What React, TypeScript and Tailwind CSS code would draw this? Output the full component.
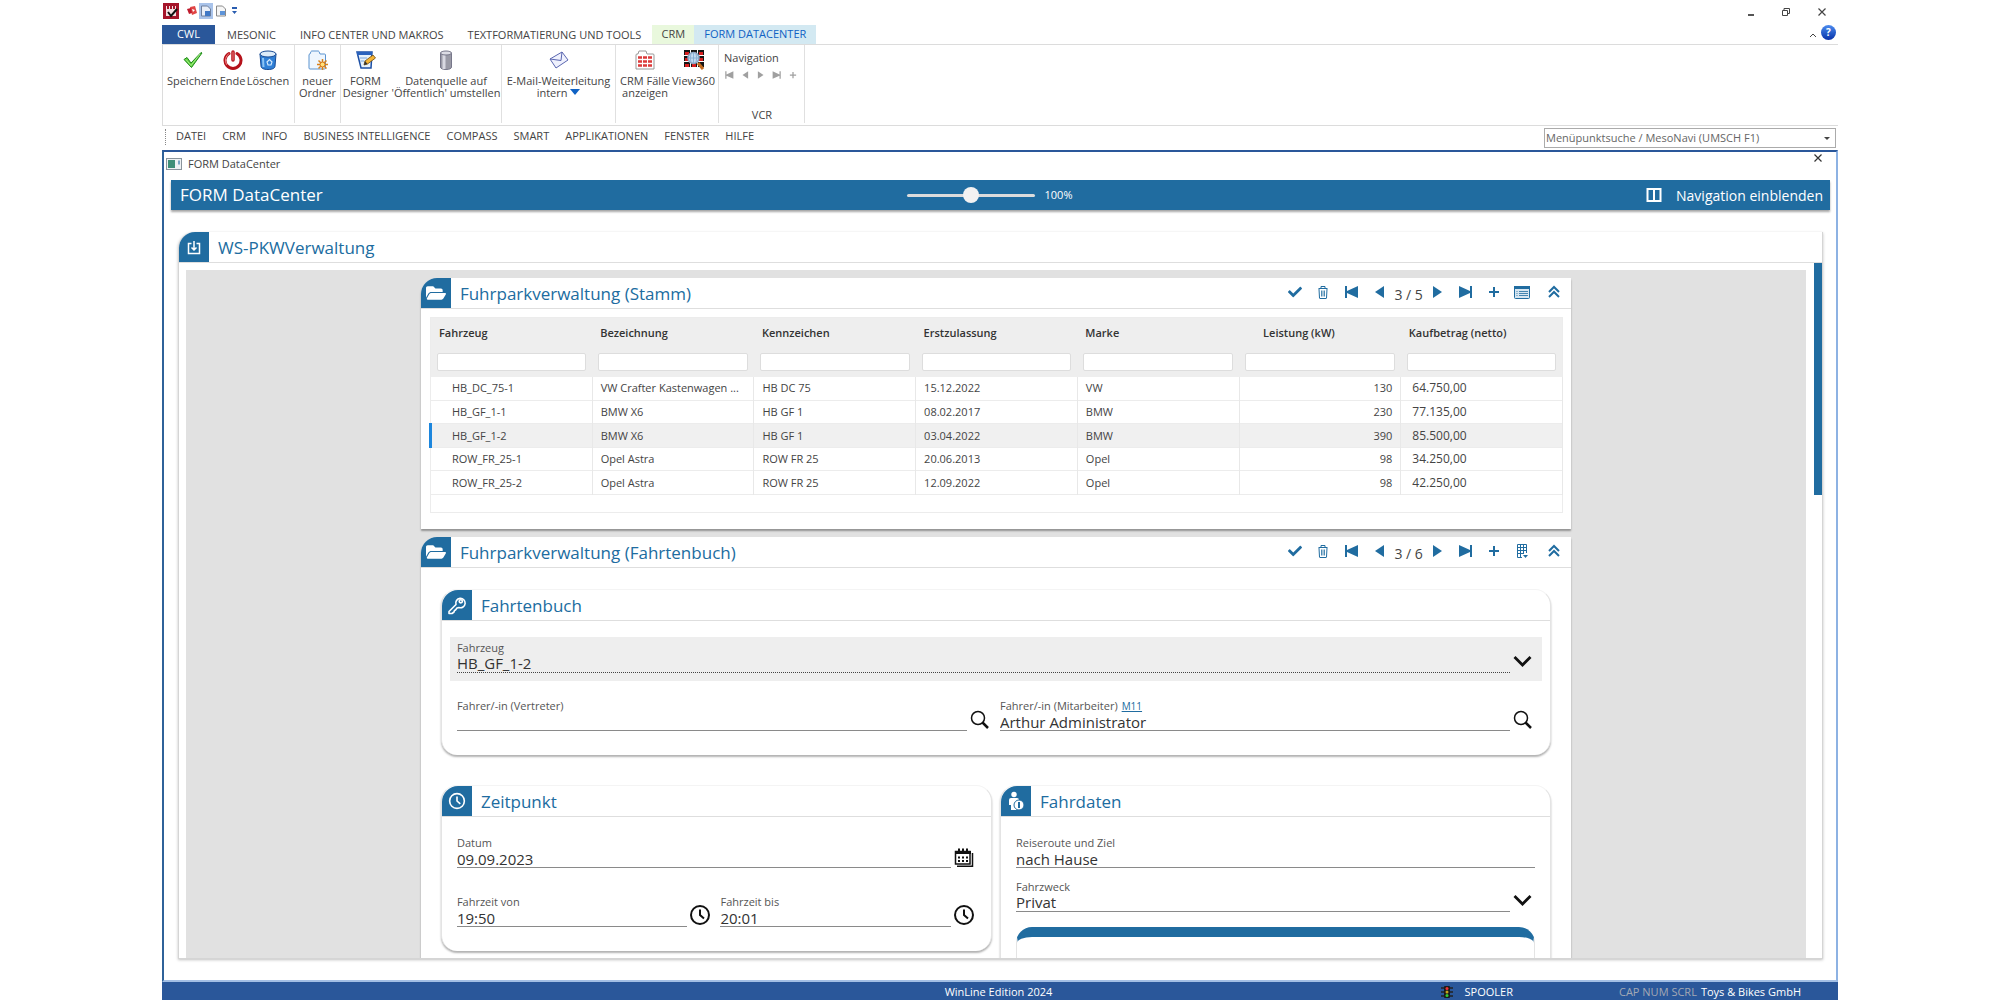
import { useState, type ReactNode } from "react";
import { FaCheck, FaFolderOpen } from "react-icons/fa";

type IconProps = { className?: string };

const ribbonTabs = ["MESONIC", "INFO CENTER UND MAKROS", "TEXTFORMATIERUNG UND TOOLS"];

const menuItems = [
  "DATEI",
  "CRM",
  "INFO",
  "BUSINESS INTELLIGENCE",
  "COMPASS",
  "SMART",
  "APPLIKATIONEN",
  "FENSTER",
  "HILFE",
];

const columns = [
  "Fahrzeug",
  "Bezeichnung",
  "Kennzeichen",
  "Erstzulassung",
  "Marke",
  "Leistung (kW)",
  "Kaufbetrag (netto)",
];

const vehicles = [
  ["HB_DC_75-1", "VW Crafter Kastenwagen ...", "HB DC 75", "15.12.2022", "VW", "130", "64.750,00"],
  ["HB_GF_1-1", "BMW X6", "HB GF 1", "08.02.2017", "BMW", "230", "77.135,00"],
  ["HB_GF_1-2", "BMW X6", "HB GF 1", "03.04.2022", "BMW", "390", "85.500,00"],
  ["ROW_FR_25-1", "Opel Astra", "ROW FR 25", "20.06.2013", "Opel", "98", "34.250,00"],
  ["ROW_FR_25-2", "Opel Astra", "ROW FR 25", "12.09.2022", "Opel", "98", "42.250,00"],
];

/* ---------- icons ---------- */

function SaveIcon() {
  return (
    <svg className="h-5 w-5" viewBox="0 0 20 20">
      <path d="M1 9.500l3-2 4 5.500L18 2.500l1 .500L8.500 17.500z" fill="#5fd23c" stroke="#1f8a1c" strokeLinejoin="round" />
      <path d="M3 9.500l5 6L17 4" fill="none" stroke="#b5f09a" strokeWidth=".8" />
    </svg>
  );
}

function PowerIcon() {
  return (
    <svg className="h-5 w-5" viewBox="0 0 20 20" fill="none" strokeLinecap="round">
      <path d="M6 3.500a8 8 0 1 0 8 0" stroke="#b5121b" strokeWidth="3" />
      <path d="M10 2v8" stroke="#b5121b" strokeWidth="3.500" />
      <path d="M6 3.500a8 8 0 0 0-2.500 11M10 2v8" stroke="#f08080" strokeWidth="1" />
    </svg>
  );
}

function BinIcon() {
  return (
    <svg className="h-5 w-5" viewBox="0 0 20 20">
      <path d="M2 4l1 12c0 2 2 3.500 7 3.500s7-1.500 7-3.500l1-12z" fill="#2f7fd6" stroke="#174a94" />
      <ellipse cx="10" cy="4" rx="8" ry="3" fill="#dcebf9" stroke="#174a94" />
      <path d="M5 8l.5 9" stroke="#8cc4f5" strokeWidth="2" />
      <path d="M9 12l2.500-2.500 2.500 2.500-1 3h-3z" fill="none" stroke="#d5eafd" strokeWidth="1.200" />
    </svg>
  );
}

function NewFolderIcon() {
  return (
    <svg className="h-5 w-5" viewBox="0 0 20 20">
      <path d="M1 5q0-1 1-1l1-2.500q.3-.500 1-.500h6q.700 0 1 .500L12 4h4.500q1 0 1 1v13q0 1-1 1H2q-1 0-1-1z" fill="#eef6fe" stroke="#5b93cf" />
      <path d="M14.500 9v11M9 14.500h11M10.500 10.500l8 8M18.500 10.500l-8 8" stroke="#d98218" strokeWidth="1.500" />
      <circle cx="14.500" cy="14.500" r="2.500" fill="#ffe27a" stroke="#d6721a" />
    </svg>
  );
}

function DesignerIcon() {
  return (
    <svg className="h-5 w-5" viewBox="0 0 20 20">
      <path d="M1 2h15l-1 16H5z" fill="#e6f1fc" stroke="#1c4fa5" strokeWidth="1.500" />
      <path d="M1 2h15v3H1z" fill="#2a62bd" />
      <path d="M4 8h7M4.500 11h4" stroke="#7ba6dc" />
      <path d="M8 15l1-4 8-6 2.500 3-8 6z" fill="#f6b433" stroke="#6b4a10" strokeWidth=".8" />
      <path d="M8 15l1-4 2.500 3z" fill="#333" />
    </svg>
  );
}

function DatabaseIcon() {
  return (
    <svg className="h-5 w-5" viewBox="0 0 20 20">
      <path d="M4.500 3v14c0 1.500 2 2.500 5.500 2.500s5.500-1 5.500-2.500V3z" fill="#9a9aa6" stroke="#77778a" />
      <path d="M8 4v15" stroke="#d9d9e2" strokeWidth="3" />
      <ellipse cx="10" cy="3" rx="5.500" ry="2" fill="#dcdce4" stroke="#77778a" />
    </svg>
  );
}

function MailIcon() {
  return (
    <svg className="h-5 w-5" viewBox="0 0 20 20">
      <path d="M1 9l12-7 6 8-12 8z" fill="#eff1fd" stroke="#5a66b0" strokeLinejoin="round" />
      <path d="M1 9l11 1.500L13 2" fill="none" stroke="#5a66b0" strokeLinejoin="round" />
    </svg>
  );
}

function CasesIcon() {
  return (
    <svg className="h-5 w-5" viewBox="0 0 20 20">
      <path d="M1 19V5q0-1 1-1h1l1-3h7l1 3h6q1 0 1 1v14z" fill="#fff" stroke="#999" />
      <path d="M3 7.500h4M8 7.500h4M13 7.500h4M3 11.500h4M8 11.500h4M13 11.500h4M3 15.500h4M8 15.500h4M13 15.500h4" stroke="#dc3a3a" strokeWidth="2.500" />
    </svg>
  );
}

function View360Icon() {
  return (
    <svg className="h-5 w-5" viewBox="0 0 20 20">
      <path d="M0 0h6v5H0zM7 0h6v5H7zM14 0h6v5h-6zM0 6h6v5H0zM14 6h6v5h-6zM0 12h6v5H0zM7 12h6v5H7zM14 12h6v5h-6z" fill="#151515" />
      <path d="M1 2h4v3H1zM8 2h4v3H8zM15 2h4v3h-4zM1 8h4v3H1zM15 8h4v3h-4zM1 14h4v3H1zM8 14h4v3H8z" fill="#d81e1e" />
      <circle cx="9.500" cy="8" r="5.500" fill="#c3dbf1" stroke="#8aa6c4" strokeWidth="1.500" />
      <path d="M4 8h11M9.500 3v10M7 4q-1.500 4 0 8M12 4q1.500 4 0 8" stroke="#7fa8d0" strokeWidth=".8" fill="none" />
      <path d="M14 13l5 6" stroke="#c26a1e" strokeWidth="3" />
    </svg>
  );
}

function FirstIcon({ className = "h-4 w-4" }: IconProps) {
  return (
    <svg className={className} viewBox="0 0 16 16" fill="currentColor">
      <path d="M2 2h2v5L15 2v12L4 9v5H2z" />
    </svg>
  );
}

function LastIcon({ className = "h-4 w-4" }: IconProps) {
  return (
    <svg className={className} viewBox="0 0 16 16" fill="currentColor">
      <path d="M14 2h-2v5L1 2v12l11-5v5h2z" />
    </svg>
  );
}

function PrevIcon({ className = "h-4 w-4" }: IconProps) {
  return (
    <svg className={className} viewBox="0 0 16 16" fill="currentColor">
      <path d="M13 2v12L4 8z" />
    </svg>
  );
}

function NextIcon({ className = "h-4 w-4" }: IconProps) {
  return (
    <svg className={className} viewBox="0 0 16 16" fill="currentColor">
      <path d="M3 2v12l9-6z" />
    </svg>
  );
}

function PlusIcon({ className = "h-4 w-4" }: IconProps) {
  return (
    <svg className={className} viewBox="0 0 16 16" fill="currentColor">
      <path d="M7 3h2v4h4v2H9v4H7V9H3V7h4z" />
    </svg>
  );
}

function TrashIcon() {
  return (
    <svg className="h-4 w-4" viewBox="0 0 16 16" fill="none" stroke="currentColor">
      <path d="M3.500 4.500h9M6 4V2.500h4V4M4 5l.5 9q0 .500.500.500h6q.500 0 .500-.500L12 5" />
      <path d="M6.500 6.500v6M8 6.500v6M9.500 6.500v6" strokeWidth=".8" />
    </svg>
  );
}

function ListIcon() {
  return (
    <svg className="h-4 w-4" viewBox="0 0 16 16" fill="none" stroke="currentColor">
      <rect x=".5" y="2.500" width="15" height="12" rx="1" fill="#d7e6f1" />
      <path d="M0 3.500h16" strokeWidth="3" />
      <path d="M5 7.500h9M5 9.500h9M5 11.500h9M2.500 7.500h1M2.500 9.500h1M2.500 11.500h1" strokeWidth=".8" />
    </svg>
  );
}

function GridIcon() {
  return (
    <svg className="h-4 w-4" viewBox="0 0 16 16" fill="none" stroke="currentColor">
      <path d="M8 14.500H3.500v-13h9V10M3.500 4.500h9M3.500 7.500h9M3.500 10.500H10M6.500 1.500v13M9.500 1.500V11" />
      <path d="M9 12h5l-2.500 3z" fill="currentColor" stroke="none" />
    </svg>
  );
}

function CollapseIcon() {
  return (
    <svg className="h-4 w-4" viewBox="0 0 16 16" fill="none" stroke="currentColor" strokeWidth="2">
      <path d="M3 8l5-5 5 5M3 13l5-5 5 5" />
    </svg>
  );
}

function ImportIcon() {
  return (
    <svg className="h-4 w-4" viewBox="0 0 16 16" fill="none" stroke="currentColor" strokeWidth="1.500">
      <path d="M5.500 4.500H2.500v10h11v-10h-3M8 2v9M5.500 8.500L8 11l2.500-2.500" />
    </svg>
  );
}

function KeyIcon() {
  return (
    <svg className="h-5 w-5" viewBox="0 0 20 20" fill="none" stroke="currentColor" strokeWidth="1.600" strokeLinejoin="round">
      <path d="M9 9.500a4.700 4.700 0 1 1 3 3l-2 .500-1.500 2-1 .500-.500 1.500-2 1.500H2v-2z" />
      <circle cx="13.800" cy="6.300" r="1.600" />
    </svg>
  );
}

function ClockIcon({ className = "h-[22px] w-[22px]" }: IconProps) {
  return (
    <svg className={className} viewBox="0 0 22 22" fill="none" stroke="currentColor" strokeWidth="2">
      <circle cx="11" cy="11" r="9" />
      <path d="M11 5.500V11l4 3.500" />
    </svg>
  );
}

function PersonIcon() {
  return (
    <svg className="h-5 w-5" viewBox="0 0 20 20" fill="currentColor">
      <circle cx="8" cy="3.500" r="2.700" />
      <path d="M3 9q0-2 2-2h6q2 0 2 2v10H5v-5H3z" />
      <circle cx="13" cy="14" r="5" stroke="#206ca0" />
      <path d="M12 11h2v6h-2z" fill="#206ca0" />
    </svg>
  );
}

function SearchIcon() {
  return (
    <svg className="h-5 w-5" viewBox="0 0 20 20" fill="none" stroke="currentColor">
      <circle cx="8" cy="8" r="6.500" strokeWidth="1.500" />
      <path d="M12.500 12.500l5.500 5.500" strokeWidth="2.500" />
    </svg>
  );
}

function ChevronIcon() {
  return (
    <svg className="h-5 w-5" viewBox="0 0 20 20" fill="none" stroke="currentColor" strokeWidth="2.800">
      <path d="M1.500 5l8 8 8-8" />
    </svg>
  );
}

function CalendarIcon() {
  return (
    <svg className="h-5 w-5" viewBox="0 0 20 20" fill="none" stroke="currentColor">
      <rect x="1.500" y="4.500" width="14.500" height="12.500" strokeWidth="1.500" />
      <path d="M1 5.500h16" strokeWidth="3" />
      <path d="M5 1.500v4M9 1.500v4M13 1.500v4" strokeWidth="2" />
      <path d="M4 10.500h2M8 10.500h2M12 10.500h2M4 14h2M8 14h2M12 14h2" strokeWidth="2" />
      <path d="M18.500 6v13.200H3" strokeWidth="1.500" />
    </svg>
  );
}

function CloseIcon() {
  return (
    <svg className="h-2 w-2" viewBox="0 0 8 8" fill="none" stroke="currentColor" strokeWidth="1.200">
      <path d="M.5.5l7 7M7.500.5l-7 7" />
    </svg>
  );
}

/* ---------- ribbon ---------- */

function RibbonButton({ icon, className, children }: { icon: ReactNode; className: string; children: ReactNode }) {
  return (
    <button type="button" className={`flex shrink-0 flex-col items-center whitespace-nowrap leading-3 ${className}`}>
      {icon}
      <span className="mt-[5px]">{children}</span>
    </button>
  );
}

function TitleBar() {
  return (
    <header className="flex h-[25px] items-start justify-between pr-3">
      <div className="flex h-[22px] items-center pl-px">
        <svg className="h-4 w-4" viewBox="0 0 16 16">
          <rect width="16" height="16" fill="#a5142a" />
          <path d="M3 3h10v10H3z" fill="#f4dfe2" />
          <path d="M4 3h2v3H4zM7 3h2v3H7zM10 3h2v3h-2z" fill="#a5142a" />
          <path d="M5 9l3 4 6-7" fill="none" stroke="#111" strokeWidth="2" />
        </svg>
        <svg className="ml-2 h-3 w-3" viewBox="0 0 12 12">
          <path d="M3 2l5-1 2 7-5 2z" fill="#e04545" />
          <path d="M0 4l4-1 1 5-3 1z" fill="#c01c2e" />
          <path d="M5 4l3 1-2 2z" fill="#fff" />
        </svg>
        <button type="button" aria-label="Speichern" className="flex h-4 w-[14px] items-center justify-center bg-[#a9c3ea]">
          <svg className="h-3 w-3" viewBox="0 0 12 12">
            <path d="M1.500 1h6l3 3v7h-9z" fill="#e8eef8" stroke="#6d7f9d" />
            <path d="M5 6h5v5H5z" fill="#3f78c6" />
          </svg>
        </button>
        <svg className="ml-[2px] h-3 w-3" viewBox="0 0 12 12">
          <path d="M1.500 1h6l3 3v7h-9z" fill="#f6f6f6" stroke="#8a8a8a" />
          <path d="M5 6h5v4H5z" fill="#5d93d8" />
        </svg>
        <svg className="ml-1 h-2 w-2" viewBox="0 0 8 8" fill="#2a5db0">
          <path d="M1 0h5v2H1zM1 4h5L3.500 7z" />
        </svg>
      </div>
      <div className="flex h-[23px] items-center gap-7 text-[#444]">
        <button type="button" aria-label="Minimieren" className="flex h-2 w-[6px] items-end">
          <span className="h-[2px] w-full bg-[#555]" />
        </button>
        <button type="button" aria-label="Wiederherstellen">
          <svg className="h-2 w-2" viewBox="0 0 8 8" fill="none" stroke="currentColor">
            <path d="M2 2V.5h5.500v5H6M.5 2.500h5v5h-5z" />
          </svg>
        </button>
        <button type="button" aria-label="Schließen">
          <CloseIcon />
        </button>
      </div>
    </header>
  );
}

function RibbonTabs() {
  return (
    <nav className="flex h-5 items-stretch justify-between border-b border-[#dcdcdc] text-[11px] text-[#444]">
      <div className="flex whitespace-nowrap">
        <button type="button" className="w-[53px] bg-[#2a579a] text-white">
          CWL
        </button>
        <div className="flex items-center gap-6 pt-px pl-3">
          {ribbonTabs.map((tab) => (
            <button type="button" key={tab}>
              {tab}
            </button>
          ))}
        </div>
        <button type="button" className="ml-[11px] w-[42px] bg-[#e9f8dd]">
          CRM
        </button>
        <button type="button" className="w-[122px] bg-[#d3e9f2] text-[#0f62c4]">
          FORM DATACENTER
        </button>
      </div>
      <div className="flex items-center gap-1 pr-[2px]">
        <button type="button" aria-label="Menüband reduzieren">
          <svg className="h-2 w-2" viewBox="0 0 8 8" fill="none" stroke="currentColor">
            <path d="M1 6l3-3 3 3" />
          </svg>
        </button>
        <button
          type="button"
          className="mb-1 h-[15px] w-[15px] rounded-full bg-linear-to-b from-[#4d8cf0] to-[#0a2fa8] text-[10px] leading-[15px] font-bold text-white"
        >
          ?
        </button>
      </div>
    </nav>
  );
}

function Ribbon() {
  return (
    <div className="flex h-[81px] border-b border-l border-[#dcdcdc] pb-[2px] text-[11px] text-[#444]">
      <div className="flex w-[132px] gap-[2px] border-r border-[#e0e0e0] pt-[5px] pl-1">
        <RibbonButton icon={<SaveIcon />} className="w-[51px]">
          Speichern
        </RibbonButton>
        <RibbonButton icon={<PowerIcon />} className="w-[25px]">
          Ende
        </RibbonButton>
        <RibbonButton icon={<BinIcon />} className="w-[42px]">
          Löschen
        </RibbonButton>
      </div>
      <div className="flex w-[46px] justify-center border-r border-[#e0e0e0] pt-[5px]">
        <RibbonButton icon={<NewFolderIcon />} className="w-10">
          neuer
          <br />
          Ordner
        </RibbonButton>
      </div>
      <div className="flex w-[161px] gap-[3px] border-r border-[#e0e0e0] pt-[5px] pl-px">
        <RibbonButton icon={<DesignerIcon />} className="w-[47px]">
          FORM
          <br />
          Designer
        </RibbonButton>
        <RibbonButton icon={<DatabaseIcon />} className="w-[108px]">
          Datenquelle auf
          <br />
          'Öffentlich' umstellen
        </RibbonButton>
      </div>
      <div className="flex w-[114px] justify-center border-r border-[#e0e0e0] pt-[5px]">
        <RibbonButton icon={<MailIcon />} className="w-[104px]">
          E-Mail-Weiterleitung
          <br />
          intern <span className="inline-block border-x-[5px] border-t-[6px] border-x-transparent border-t-[#0f62c4] align-[2px]" />
        </RibbonButton>
      </div>
      <div className="flex w-[103px] gap-px border-r border-[#e0e0e0] pt-[5px] pl-[3px]">
        <RibbonButton icon={<CasesIcon />} className="w-[52px]">
          CRM Fälle
          <br />
          anzeigen
        </RibbonButton>
        <RibbonButton icon={<View360Icon />} className="w-[43px]">
          View360
        </RibbonButton>
      </div>
      <div className="flex w-[86px] flex-col border-r border-[#e0e0e0] pt-[5px] pl-[5px]">
        <span className="leading-4">Navigation</span>
        <div className="flex gap-[6px] pt-1 text-[#a0a0a0]">
          <button type="button" aria-label="Erster Datensatz">
            <FirstIcon className="h-[10px] w-[10px]" />
          </button>
          <button type="button" aria-label="Vorheriger Datensatz">
            <PrevIcon className="h-[10px] w-[10px]" />
          </button>
          <button type="button" aria-label="Nächster Datensatz">
            <NextIcon className="h-[10px] w-[10px]" />
          </button>
          <button type="button" aria-label="Letzter Datensatz">
            <LastIcon className="h-[10px] w-[10px]" />
          </button>
          <button type="button" aria-label="Neuer Datensatz">
            <PlusIcon className="h-[10px] w-[10px]" />
          </button>
        </div>
        <span className="mt-auto pr-1 text-center leading-4">VCR</span>
      </div>
    </div>
  );
}

function MenuBar() {
  return (
    <nav className="flex h-6 items-center justify-between pr-[2px] text-[11px] text-[#444]">
      <div className="mb-[3px] ml-[3px] flex h-4 items-center gap-4 border-l border-dotted border-[#888] pl-[10px] whitespace-nowrap">
        {menuItems.map((item) => (
          <button type="button" key={item}>
            {item}
          </button>
        ))}
      </div>
      <div className="flex h-5 w-[292px] items-center border border-[#ababab] bg-white px-px">
        <input
          aria-label="Menüpunktsuche"
          className="h-[18px] min-w-0 flex-1 text-[11px] leading-[18px] outline-none placeholder:text-[#666]"
          placeholder="Menüpunktsuche / MesoNavi (UMSCH F1)"
        />
        <span className="mr-1 border-x-[3px] border-t-[3px] border-x-transparent border-t-[#444]" />
      </div>
    </nav>
  );
}

/* ---------- form building blocks ---------- */

function SectionHeader({ icon, title, children }: { icon: ReactNode; title: string; children?: ReactNode }) {
  return (
    <div className="flex h-[31px] shrink-0 items-stretch border-b border-[#dedede]">
      <span className="flex h-[30px] w-[30px] items-center justify-center rounded-tl-2xl bg-[#206ca0] text-white">
        {icon}
      </span>
      <h2 className="flex-1 pl-[9px] text-[17px] leading-[31px] text-[#206ca0]">{title}</h2>
      {children}
    </div>
  );
}

function Toolbar({ position, extra }: { position: string; extra: ReactNode }) {
  return (
    <div className="flex h-7 items-center text-[#206ca0]">
      <button type="button" aria-label="Übernehmen" className="flex w-7 justify-center">
        <FaCheck className="h-[14px] w-[14px]" />
      </button>
      <button type="button" aria-label="Löschen" className="flex w-7 justify-center">
        <TrashIcon />
      </button>
      <button type="button" aria-label="Erster" className="flex w-7 justify-center">
        <FirstIcon />
      </button>
      <button type="button" aria-label="Zurück" className="flex w-7 justify-center">
        <PrevIcon />
      </button>
      <span className="w-[31px] pt-1 text-center text-[14px] whitespace-nowrap text-[#444]">{position}</span>
      <button type="button" aria-label="Weiter" className="flex w-7 justify-center">
        <NextIcon />
      </button>
      <button type="button" aria-label="Letzter" className="flex w-7 justify-center">
        <LastIcon />
      </button>
      <button type="button" aria-label="Neu" className="flex w-7 justify-center">
        <PlusIcon />
      </button>
      <button type="button" aria-label="Ansicht" className="flex w-7 justify-center">
        {extra}
      </button>
      <button type="button" aria-label="Einklappen" className="flex w-[35px] justify-center">
        <CollapseIcon />
      </button>
    </div>
  );
}

type FieldProps = {
  id: string;
  label: string;
  value: string;
  icon?: ReactNode;
  link?: string;
  select?: boolean;
  dotted?: boolean;
};

function Field({ id, label, value, icon, link, select, dotted }: FieldProps) {
  const box = `h-[18px] w-full appearance-none border-b bg-transparent text-[15px] leading-[17px] text-[#333] outline-none ${
    dotted ? "border-dotted border-[#444]" : "border-[#8a8a8a]"
  }`;
  return (
    <div className="flex min-w-0 items-end">
      <div className="min-w-0 flex-1">
        <div className="flex gap-1 text-[11px] leading-[14px] text-[#555]">
          <label htmlFor={id}>{label}</label>
          {link && (
            <a href="#" className="text-[10px] text-[#206ca0] underline">
              {link}
            </a>
          )}
        </div>
        {select ? (
          <select id={id} className={`block ${box}`}>
            <option>{value}</option>
          </select>
        ) : (
          <input id={id} className={`block ${box}`} defaultValue={value} />
        )}
      </div>
      {icon && <span className="flex w-[25px] shrink-0 justify-center pb-px text-[#111]">{icon}</span>}
    </div>
  );
}

function Group({ icon, title, children }: { icon: ReactNode; title: string; children: ReactNode }) {
  return (
    <section className="rounded-2xl border-x border-t border-x-[#e4e4e4] border-t-[#f4f4f4] bg-white shadow-[0_2px_2px_rgba(0,0,0,0.3)]">
      <SectionHeader icon={icon} title={title} />
      {children}
    </section>
  );
}

function cellClass(i: number, active: boolean) {
  if (i === 0) return active ? "border-l-[3px] border-l-[#1c86dd] pl-5" : "pl-[21px]";
  if (i === 5) return "pr-2 text-right";
  if (i === 6) return "pl-[11px] text-[12px]";
  return "pl-2";
}

function VehicleTable() {
  return (
    <table className="w-full table-fixed border-collapse border border-[#ececec] text-left text-[11px] text-[#444]">
      <thead className="bg-[#eee] text-[#333]">
        <tr className="h-[30px]">
          {columns.map((col, i) => (
            <th key={col} scope="col" className={`font-semibold ${i === 5 ? "pl-6" : "pl-2"}`}>
              {col}
            </th>
          ))}
        </tr>
        <tr className="h-[29px]">
          {columns.map((col) => (
            <td key={col} className="px-[6px]">
              <input
                aria-label={`Filter ${col}`}
                className="block h-[18px] w-full rounded-xs border border-[#ddd] bg-white px-1 outline-none"
              />
            </td>
          ))}
        </tr>
      </thead>
      <tbody>
        {vehicles.map((row) => {
          const active = row[0] === "HB_GF_1-2";
          return (
            <tr key={row[0]} className={`border-b border-[#ececec] odd:h-6 even:h-[23px] ${active ? "bg-[#f0f0f0]" : ""}`}>
              {row.map((cell, i) => (
                <td
                  key={i}
                  className={`border-r border-[#e8e8e8] py-0 leading-4 whitespace-nowrap ${cellClass(i, active)}`}
                >
                  {cell}
                </td>
              ))}
            </tr>
          );
        })}
        <tr className="h-[18px]">
          <td colSpan={7} />
        </tr>
      </tbody>
    </table>
  );
}

function DataCenter() {
  const [zoom, setZoom] = useState(100);

  return (
    <main className="flex min-h-0 flex-1 flex-col border-2 border-t-[#2a579a] border-r-[#8db2e3] border-b-[#a3bfe4] border-l-[#2f6299] bg-white">
      <div className="flex h-7 shrink-0 items-start justify-between pr-[14px] pl-[2px]">
        <div className="flex h-6 items-center gap-[6px] text-[11px] text-[#444]">
          <svg className="h-3 w-4" viewBox="0 0 16 12">
            <rect x=".5" y=".5" width="15" height="11" fill="#eef1f3" stroke="#8a949c" />
            <rect x="2" y="2" width="7" height="8" fill="#3f8f78" />
            <path d="M12 2.500h2v4h-2z" fill="#7aa6c4" />
          </svg>
          FORM DataCenter
        </div>
        <button type="button" aria-label="Fenster schließen" className="flex h-3 items-center text-[#333]">
          <CloseIcon />
        </button>
      </div>

      <div className="mr-[6px] ml-[7px] grid h-[30px] shrink-0 grid-cols-[1fr_auto_1fr] items-center bg-[#206ca0] pr-[7px] pl-[9px] text-white shadow-[0_2px_2px_rgba(0,0,0,0.35)]">
        <h1 className="text-[17px]">FORM DataCenter</h1>
        <label className="flex items-center gap-[10px] pr-6 text-[11px]">
          <input
            type="range"
            min={50}
            max={150}
            value={zoom}
            onChange={(e) => setZoom(Number(e.target.value))}
            aria-label="Zoom"
            className="h-4 w-32 appearance-none bg-transparent [&::-webkit-slider-runnable-track]:h-[3px] [&::-webkit-slider-runnable-track]:rounded-full [&::-webkit-slider-runnable-track]:bg-[#dcdcdc] [&::-webkit-slider-thumb]:-mt-[7px] [&::-webkit-slider-thumb]:h-4 [&::-webkit-slider-thumb]:w-4 [&::-webkit-slider-thumb]:appearance-none [&::-webkit-slider-thumb]:rounded-full [&::-webkit-slider-thumb]:bg-[#f2f2f2]"
          />
          {zoom}%
        </label>
        <button type="button" className="flex items-center gap-[14px] justify-self-end text-[14px]">
          <svg className="h-4 w-4" viewBox="0 0 16 16" fill="none" stroke="currentColor" strokeWidth="2">
            <path d="M1.500 2h13v12h-13zM8 2v12" />
          </svg>
          Navigation einblenden
        </button>
      </div>

      <section className="mt-[22px] mr-[13px] mb-[21px] ml-[14px] flex min-h-0 flex-1 flex-col rounded-tl-2xl border-x border-b border-[#d5d5d5] shadow-[0_1px_3px_rgba(0,0,0,0.25)]">
        <SectionHeader icon={<ImportIcon />} title="WS-PKWVerwaltung" />
        <div className="flex min-h-0 flex-1">
          <div className="mt-[7px] mr-2 ml-[7px] min-w-0 flex-1 overflow-hidden bg-[#e1e1e1] pt-2">
            <div className="mx-auto flex w-[71%] flex-col gap-2">
              <section className="rounded-tl-2xl bg-white shadow-[0_2px_2px_rgba(0,0,0,0.35)]">
                <SectionHeader icon={<FaFolderOpen className="h-5 w-5" />} title="Fuhrparkverwaltung (Stamm)">
                  <Toolbar position="3 / 5" extra={<ListIcon />} />
                </SectionHeader>
                <div className="px-2 pt-2 pb-4">
                  <VehicleTable />
                </div>
              </section>

              <section className="rounded-tl-2xl bg-white shadow-[0_2px_2px_rgba(0,0,0,0.35)]">
                <SectionHeader icon={<FaFolderOpen className="h-5 w-5" />} title="Fuhrparkverwaltung (Fahrtenbuch)">
                  <Toolbar position="3 / 6" extra={<GridIcon />} />
                </SectionHeader>
                <div className="flex flex-col gap-[30px] px-5 pt-[21px]">
                  <Group icon={<KeyIcon />} title="Fahrtenbuch">
                    <div className="flex flex-col gap-[18px] px-2 pt-4 pb-6">
                      <div className="bg-[#eee] px-[7px] pt-1 pb-2">
                        <Field id="fahrzeug" label="Fahrzeug" value="HB_GF_1-2" icon={<ChevronIcon />} select dotted />
                      </div>
                      <div className="grid grid-cols-2 gap-2 px-[7px]">
                        <Field id="vertreter" label="Fahrer/-in (Vertreter)" value="" icon={<SearchIcon />} />
                        <Field
                          id="mitarbeiter"
                          label="Fahrer/-in (Mitarbeiter)"
                          link="M11"
                          value="Arthur Administrator"
                          icon={<SearchIcon />}
                        />
                      </div>
                    </div>
                  </Group>

                  <div className="grid grid-cols-2 items-start gap-2">
                    <Group icon={<ClockIcon className="h-[18px] w-[18px]" />} title="Zeitpunkt">
                      <div className="flex flex-col gap-[27px] px-[15px] pt-[19px] pb-6">
                        <Field id="datum" label="Datum" value="09.09.2023" icon={<CalendarIcon />} />
                        <div className="grid grid-cols-2 gap-2">
                          <Field id="von" label="Fahrzeit von" value="19:50" icon={<ClockIcon />} />
                          <Field id="bis" label="Fahrzeit bis" value="20:01" icon={<ClockIcon />} />
                        </div>
                      </div>
                    </Group>
                    <Group icon={<PersonIcon />} title="Fahrdaten">
                      <div className="flex flex-col gap-3 px-[15px] pt-[19px]">
                        <Field id="route" label="Reiseroute und Ziel" value="nach Hause" />
                        <Field id="zweck" label="Fahrzweck" value="Privat" icon={<ChevronIcon />} select />
                        <div className="mt-[3px] h-32 rounded-t-2xl border-x border-t-[10px] border-x-[#e4e4e4] border-t-[#206ca0]" />
                      </div>
                    </Group>
                  </div>
                </div>
              </section>
            </div>
          </div>
          <div className="w-2 shrink-0">
            <div className="h-1/3 bg-[#206ca0]" />
          </div>
        </div>
      </section>
    </main>
  );
}

function StatusBar() {
  return (
    <footer className="grid h-[18px] shrink-0 grid-cols-3 items-center bg-[#2a579a] pt-[2px] text-[11px] text-white">
      <span />
      <span className="pr-[3px] text-center">WinLine Edition 2024</span>
      <div className="flex items-center justify-end pr-[37px] whitespace-nowrap">
        <svg className="h-3 w-3" viewBox="0 0 12 12">
          <path d="M0 2h12M0 6h12M0 10h12" stroke="#222" strokeWidth="1.500" />
          <rect x="3" width="6" height="12" rx="1" fill="#1b1b1b" />
          <circle cx="6" cy="2.500" r="1.500" fill="#e33" />
          <circle cx="6" cy="6" r="1.500" fill="#c9a21a" />
          <circle cx="6" cy="9.500" r="1.500" fill="#3c3" />
        </svg>
        <span className="ml-3">SPOOLER</span>
        <span className="ml-[106px] text-[#a3a9b5]">CAP NUM SCRL</span>
        <span className="ml-1">Toys &amp; Bikes GmbH</span>
      </div>
    </footer>
  );
}

export default function App() {
  return (
    <div className="flex h-screen flex-col bg-white px-[162px] font-['Open_Sans','Noto_Sans',sans-serif]">
      <TitleBar />
      <RibbonTabs />
      <Ribbon />
      <MenuBar />
      <DataCenter />
      <StatusBar />
    </div>
  );
}
